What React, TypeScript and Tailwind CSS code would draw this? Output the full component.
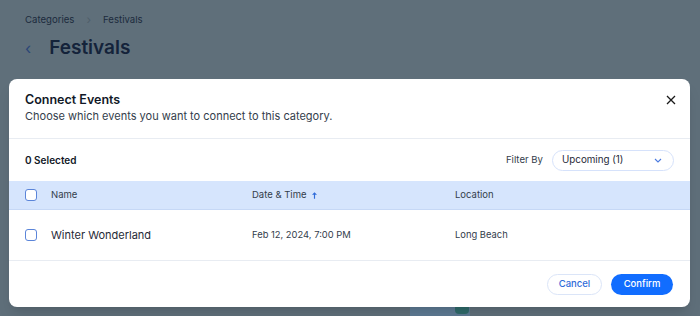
import React from 'react';

const events = [{ name: 'Winter Wonderland', date: 'Feb 12, 2024, 7:00 PM', location: 'Long Beach' }];

function Checkbox() {
    return <span className="block h-[12px] w-[12px] rounded-[3px] border border-[#5b85d9] bg-white" />;
}

export default function App() {
    return (
        <div
            className="relative h-[316px] w-[700px] overflow-hidden bg-[#5f6f7a]"
            style={{ fontFamily: 'Inter, "Noto Sans", sans-serif' }}
        >
            <div className="px-[25px] pt-[11px]">
                <div className="flex items-center gap-[12px] text-[9.6px] text-[#1c2b3d]">
                    <span>Categories</span>
                    <span className="text-[12px] text-[#4f5e6a]">›</span>
                    <span>Festivals</span>
                </div>
                <div className="mt-[5px] flex items-center gap-[18px]">
                    <span className="text-[16px] text-[#2b4677]">‹</span>
                    <h1 className="text-[19px] font-semibold text-[#14233a]">Festivals</h1>
                </div>
            </div>

            <div className="absolute top-[292px] left-[410px] h-[30px] w-[60px] rounded bg-[#5d7a93]" />
            <div className="absolute top-[304px] left-[455px] h-[10px] w-[14px] rounded bg-[#2f6a6a]" />

            <div className="absolute top-[79px] left-[9px] w-[681px] rounded-[8px] bg-white shadow-lg">
                <div className="flex items-start justify-between px-[16px] pt-[12px] pb-[14px]">
                    <div>
                        <div className="text-[12.5px] font-semibold leading-[17px] text-[#111827]">Connect Events</div>
                        <div className="text-[11px] leading-[16px] text-[#333d4b]">
                            Choose which events you want to connect to this category.
                        </div>
                    </div>
                    <button className="mt-[4px] mr-[-2px] text-[#1a1a1a]">
                        <svg width="10" height="10" viewBox="0 0 10 10" fill="none" stroke="currentColor" strokeWidth="1.3">
                            <path d="M1 1l8 8M9 1l-8 8" />
                        </svg>
                    </button>
                </div>
                <div className="border-t border-[#e8ecf2]" />

                <div className="flex h-[42px] items-center justify-between px-[16px]">
                    <span className="text-[10px] font-semibold text-[#111827]">0 Selected</span>
                    <div className="flex items-center gap-[9px]">
                        <span className="text-[9.6px] text-[#333d4b]">Filter By</span>
                        <div className="flex h-[21px] w-[122px] items-center justify-between rounded-full border border-[#d6e2fb] pr-[11px] pl-[9px]">
                            <span className="text-[9.8px] text-[#1f2a37]">Upcoming (1)</span>
                            <svg width="8" height="5" viewBox="0 0 8 5" fill="none" stroke="#4a7ae0" strokeWidth="1.1">
                                <path d="M1 1l3 3 3-3" />
                            </svg>
                        </div>
                    </div>
                </div>

                <div className="flex h-[29px] items-center border-b border-[#c6d8f6] bg-[#d6e5fd] px-[16px] text-[9.5px] text-[#333d4b]">
                    <div className="w-[26px]">
                        <Checkbox />
                    </div>
                    <div className="w-[201px]">Name</div>
                    <div className="flex w-[203px] items-center gap-[5px]">
                        <span>Date &amp; Time</span>
                        <svg width="5" height="7" viewBox="0 0 6 8" fill="#2f6bd9">
                            <path d="M3 0L6 3.2H3.7V8H2.3V3.2H0z" />
                        </svg>
                    </div>
                    <div>Location</div>
                </div>

                {events.map((e) => (
                    <div key={e.name} className="flex h-[51px] items-center border-b border-[#e8ecf2] px-[16px]">
                        <div className="w-[26px]">
                            <Checkbox />
                        </div>
                        <div className="w-[201px] text-[11px] text-[#1f2a37]">{e.name}</div>
                        <div className="w-[203px] text-[9.4px] text-[#333d4b]">{e.date}</div>
                        <div className="text-[9.4px] text-[#333d4b]">{e.location}</div>
                    </div>
                ))}

                <div className="flex h-[46px] items-center justify-end gap-[9px] px-[17px]">
                    <button className="h-[21px] w-[55px] rounded-full border border-[#dbe5f8] text-[9.5px] font-medium text-[#2f6bd9]">
                        Cancel
                    </button>
                    <button className="h-[21px] w-[62px] rounded-full bg-[#116dff] text-[9.5px] font-medium text-white">
                        Confirm
                    </button>
                </div>
            </div>
        </div>
    );
}
